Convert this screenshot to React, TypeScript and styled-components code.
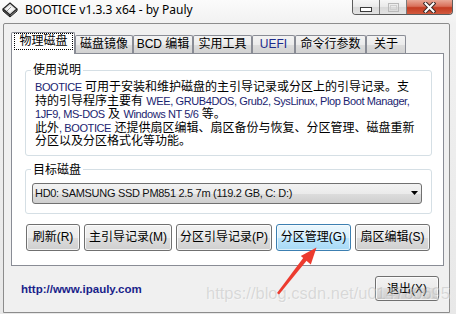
import React from "react";
import styled, { createGlobalStyle } from "styled-components";

const FONT = `"Liberation Sans", "Noto Sans CJK SC", sans-serif`;

const GlobalStyle = createGlobalStyle`
  html, body { margin: 0; padding: 0; }
  body { width: 456px; height: 314px; overflow: hidden; font-family: ${FONT}; color: #000; }
  * { box-sizing: border-box; }
`;

const Window = styled.div`
  position: relative;
  width: 456px;
  height: 314px;
  display: flex;
  flex-direction: column;
  background: linear-gradient(to bottom, #fbfbfb 0px, #f1f1f1 24px, #e8e8e8 100%);
  overflow: hidden;
`;

const TitleBar = styled.div`
  height: 23px;
  flex: none;
  display: flex;
  align-items: flex-start;
  padding: 0 3px 0 2px;
`;

const AppIcon = styled.svg`
  flex: none;
  margin-top: 2px;
`;

const Title = styled.div`
  margin: 2px 0 0 7px;
  font-family: "Noto Sans", "Liberation Sans", sans-serif;
  font-size: 12px;
  line-height: 16px;
  color: #000;
  text-shadow: 0 0 5px #fff;
`;

const ControlBox = styled.div`
  margin-left: auto;
  display: flex;
  height: 15px;
  border: 1px solid #5c5c5c;
  border-top: none;
  border-radius: 0 0 4px 4px;
  overflow: hidden;
`;

const CtrlButton = styled.div<{ $w: number; $close?: boolean }>`
  width: ${(p) => p.$w}px;
  height: 100%;
  display: flex;
  align-items: center;
  justify-content: center;
  & + & { border-left: 1px solid #7a7a7a; }
  background: ${(p) =>
    p.$close
      ? "linear-gradient(to bottom, #e9a896 0%, #d9705a 45%, #c43c22 55%, #d25a3e 100%)"
      : "linear-gradient(to bottom, #f6f6f6 0%, #e9e9e9 50%, #d9d9d9 50%, #e2e2e2 100%)"};
`;

const Client = styled.div`
  flex: 1;
  margin: 0 6px 1px 3px;
  border: 1px solid #8c8c8c;
  border-radius: 2px 2px 0 0;
  background: #f0f0f0;
  display: flex;
  flex-direction: column;
  padding: 8px 5px 0 7px;
`;

const TabStrip = styled.div`
  display: flex;
  align-items: flex-end;
  position: relative;
  z-index: 1;
`;

const Tab = styled.div<{ $w: number; $active?: boolean; $latin?: boolean }>`
  width: ${(p) => p.$w}px;
  height: ${(p) => (p.$active ? 22 : 18)}px;
  margin-bottom: ${(p) => (p.$active ? -1 : 0)}px;
  border: 1px solid #898c95;
  border-bottom: none;
  border-radius: 2px 2px 0 0;
  background: ${(p) =>
    p.$active
      ? "#ffffff"
      : "linear-gradient(to bottom, #f3f3f3 0%, #ebebeb 50%, #dddddd 50%, #d2d2d2 100%)"};
  font-size: 12px;
  line-height: 17px;
  text-align: center;
  white-space: nowrap;
  color: ${(p) => (p.$latin ? "#1c2a8c" : "#000")};
`;

const FocusRing = styled.div`
  margin: 0 1px 0 2px;
  height: 17px;
  border: 1px dotted #000;
  line-height: 15px;
`;

const Panel = styled.div`
  border: 1px solid #898c95;
  background: #ffffff;
  padding: 9px 11px 14px 13px;
  display: flex;
  flex-direction: column;
`;

const Group = styled.fieldset<{ $pad: string; $inset: number }>`
  margin: 0;
  min-width: 0;
  border: 1px solid #d5dfe5;
  border-radius: 3px;
  padding: ${(p) => p.$pad};
  padding-left: ${(p) => p.$inset}px;
  & + & { margin-top: 7px; }
  & > legend { margin-left: ${(p) => 5 - p.$inset}px; }
`;

const Legend = styled.legend`
  padding: 0 2px;
  font-size: 12px;
  line-height: 14px;
`;

const Desc = styled.div`
  font-size: 12px;
  line-height: 13.5px;
`;

const Line = styled.div`
  white-space: nowrap;
  height: 13.5px;
`;

const Lat = styled.span`
  color: #1b2470;
  font-size: 11px;
  letter-spacing: -0.4px;
`;

const Combo = styled.div`
  height: 21px;
  display: flex;
  align-items: center;
  border: 1px solid #707070;
  border-radius: 3px;
  background: linear-gradient(to bottom, #f2f2f2 0%, #ebebeb 50%, #dddddd 50%, #cfcfcf 100%);
  padding: 0 3px 0 2px;
  font-size: 11px;
  letter-spacing: -0.3px;
  color: #111;
  white-space: nowrap;
`;

const ComboArrow = styled.svg`
  margin-left: auto;
  flex: none;
`;

const ButtonRow = styled.div`
  display: flex;
  gap: 4px;
  margin: 10px 0 0 1px;
`;

const Btn = styled.button<{ $w: number; $h?: number; $hot?: boolean }>`
  width: ${(p) => p.$w}px;
  height: ${(p) => p.$h ?? 27}px;
  padding: 0;
  margin: 0;
  border: 1px solid ${(p) => (p.$hot ? "#3c7fb1" : "#707070")};
  border-radius: 3px;
  box-shadow: inset 0 0 0 1px ${(p) => (p.$hot ? "rgba(255,255,255,0.6)" : "rgba(255,255,255,0.75)")};
  background: ${(p) =>
    p.$hot
      ? "linear-gradient(to bottom, #eaf6fd 0%, #d9f0fc 50%, #bee6fd 50%, #a7d9f5 100%)"
      : "linear-gradient(to bottom, #f2f2f2 0%, #ebebeb 50%, #dddddd 50%, #cfcfcf 100%)"};
  font-family: ${FONT};
  font-size: 12px;
  line-height: 14px;
  color: #000;
  white-space: nowrap;
  display: flex;
  align-items: center;
  justify-content: center;
`;

const Footer = styled.div`
  flex: 1;
  display: flex;
  align-items: center;
  justify-content: space-between;
  padding: 0 5px 0 10px;
`;

const Link = styled.a`
  font-family: "Liberation Sans", sans-serif;
  font-weight: bold;
  font-size: 11.5px;
  color: #1a1f8a;
  text-decoration: none;
`;

const Watermark = styled.div`
  position: absolute;
  left: 206px;
  top: 283px;
  font-family: "Liberation Sans", sans-serif;
  font-size: 16.5px;
  line-height: 20px;
  color: rgba(150, 150, 150, 0.28);
  text-shadow: 1px 1px 0 rgba(255, 255, 255, 0.35);
  white-space: nowrap;
  pointer-events: none;
`;

const ArrowLayer = styled.svg`
  position: absolute;
  left: 0;
  top: 0;
  pointer-events: none;
`;

export default function App() {
  return (
    <>
      <GlobalStyle />
      <Window>
        <TitleBar>
          <AppIcon width="16" height="16" viewBox="0 0 16 16">
            <polygon points="8,1 15,7 8,13 1,7" fill="#d9d9d9" stroke="#222" strokeWidth="1.2" />
            <polygon points="1,7 8,13 8,15 1,9" fill="#555" stroke="#222" strokeWidth="1" />
            <polygon points="8,13 15,7 15,9 8,15" fill="#888" stroke="#222" strokeWidth="1" />
            <polygon points="8,3.5 12.5,7 8,10.5 3.5,7" fill="#f4f4f4" />
            <line x1="5" y1="9" x2="9" y2="5" stroke="#777" strokeWidth="0.8" />
          </AppIcon>
          <Title>BOOTICE v1.3.3 x64 - by Pauly</Title>
          <ControlBox>
            <CtrlButton $w={26}>
              <svg width="12" height="6" viewBox="0 0 12 6" style={{ marginTop: 5 }}>
                <rect x="0.5" y="0.5" width="11" height="4" fill="#fff" stroke="#3a3a3a" />
              </svg>
            </CtrlButton>
            <CtrlButton $w={27}>
              <svg width="11" height="9" viewBox="0 0 11 9">
                <rect x="0.5" y="0.5" width="10" height="8" fill="none" stroke="#b9b9b9" />
                <rect x="2.5" y="2.5" width="6" height="4" fill="none" stroke="#cfcfcf" />
              </svg>
            </CtrlButton>
            <CtrlButton $w={46} $close>
              <svg width="13" height="11" viewBox="0 0 13 11">
                <path d="M2.5 1.5 L10.5 9.5 M10.5 1.5 L2.5 9.5" stroke="#3b2a28" strokeWidth="4" strokeLinecap="square" />
                <path d="M2.5 1.5 L10.5 9.5 M10.5 1.5 L2.5 9.5" stroke="#ffffff" strokeWidth="2" strokeLinecap="square" />
              </svg>
            </CtrlButton>
          </ControlBox>
        </TitleBar>

        <Client>
          <TabStrip>
            <Tab $w={64} $active>
              <FocusRing>物理磁盘</FocusRing>
            </Tab>
            <Tab $w={58}>磁盘镜像</Tab>
            <Tab $w={60}>BCD 编辑</Tab>
            <Tab $w={59}>实用工具</Tab>
            <Tab $w={43} $latin>UEFI</Tab>
            <Tab $w={71}>命令行参数</Tab>
            <Tab $w={40}>关于</Tab>
          </TabStrip>

          <Panel>
            <Group $pad="4px 9px 6px" $inset={9}>
              <Legend>使用说明</Legend>
              <Desc>
                <Line>
                  <Lat>BOOTICE</Lat> 可用于安装和维护磁盘的主引导记录或分区上的引导记录。支
                </Line>
                <Line>
                  持的引导程序主要有 <Lat>WEE, GRUB4DOS, Grub2, SysLinux, Plop Boot Manager,</Lat>
                </Line>
                <Line>
                  <Lat>1JF9, MS-DOS</Lat> 及 <Lat>Windows NT 5/6</Lat> 等。
                </Line>
                <Line>
                  此外<Lat>, BOOTICE</Lat> 还提供扇区编辑、扇区备份与恢复、分区管理、磁盘重新
                </Line>
                <Line>分区以及分区格式化等功能。</Line>
              </Desc>
            </Group>

            <Group $pad="6px 9px 9px" $inset={6}>
              <Legend>目标磁盘</Legend>
              <Combo>
                HD0: SAMSUNG SSD PM851 2.5 7m (119.2 GB, C: D:)
                <ComboArrow width="7" height="4" viewBox="0 0 7 4">
                  <polygon points="0,0 7,0 3.5,4" fill="#000" />
                </ComboArrow>
              </Combo>
            </Group>

            <ButtonRow>
              <Btn $w={54}>刷新(R)</Btn>
              <Btn $w={88}>主引导记录(M)</Btn>
              <Btn $w={96}>分区引导记录(P)</Btn>
              <Btn $w={75} $hot>分区管理(G)</Btn>
              <Btn $w={75}>扇区编辑(S)</Btn>
            </ButtonRow>
          </Panel>

          <Footer>
            <Link href="#">http://www.ipauly.com</Link>
            <Btn $w={64} $h={25}>退出(X)</Btn>
          </Footer>
        </Client>

        <Watermark>https://blog.csdn.net/u014780695</Watermark>
        <ArrowLayer width="456" height="314" viewBox="0 0 456 314">
          <polygon points="277,293 279,294.5 308,259 304.5,256.3" fill="#ec3b2f" />
          <polygon points="316.5,247.5 310.8,264.5 300.8,256" fill="#ec3b2f" />
        </ArrowLayer>
      </Window>
    </>
  );
}
